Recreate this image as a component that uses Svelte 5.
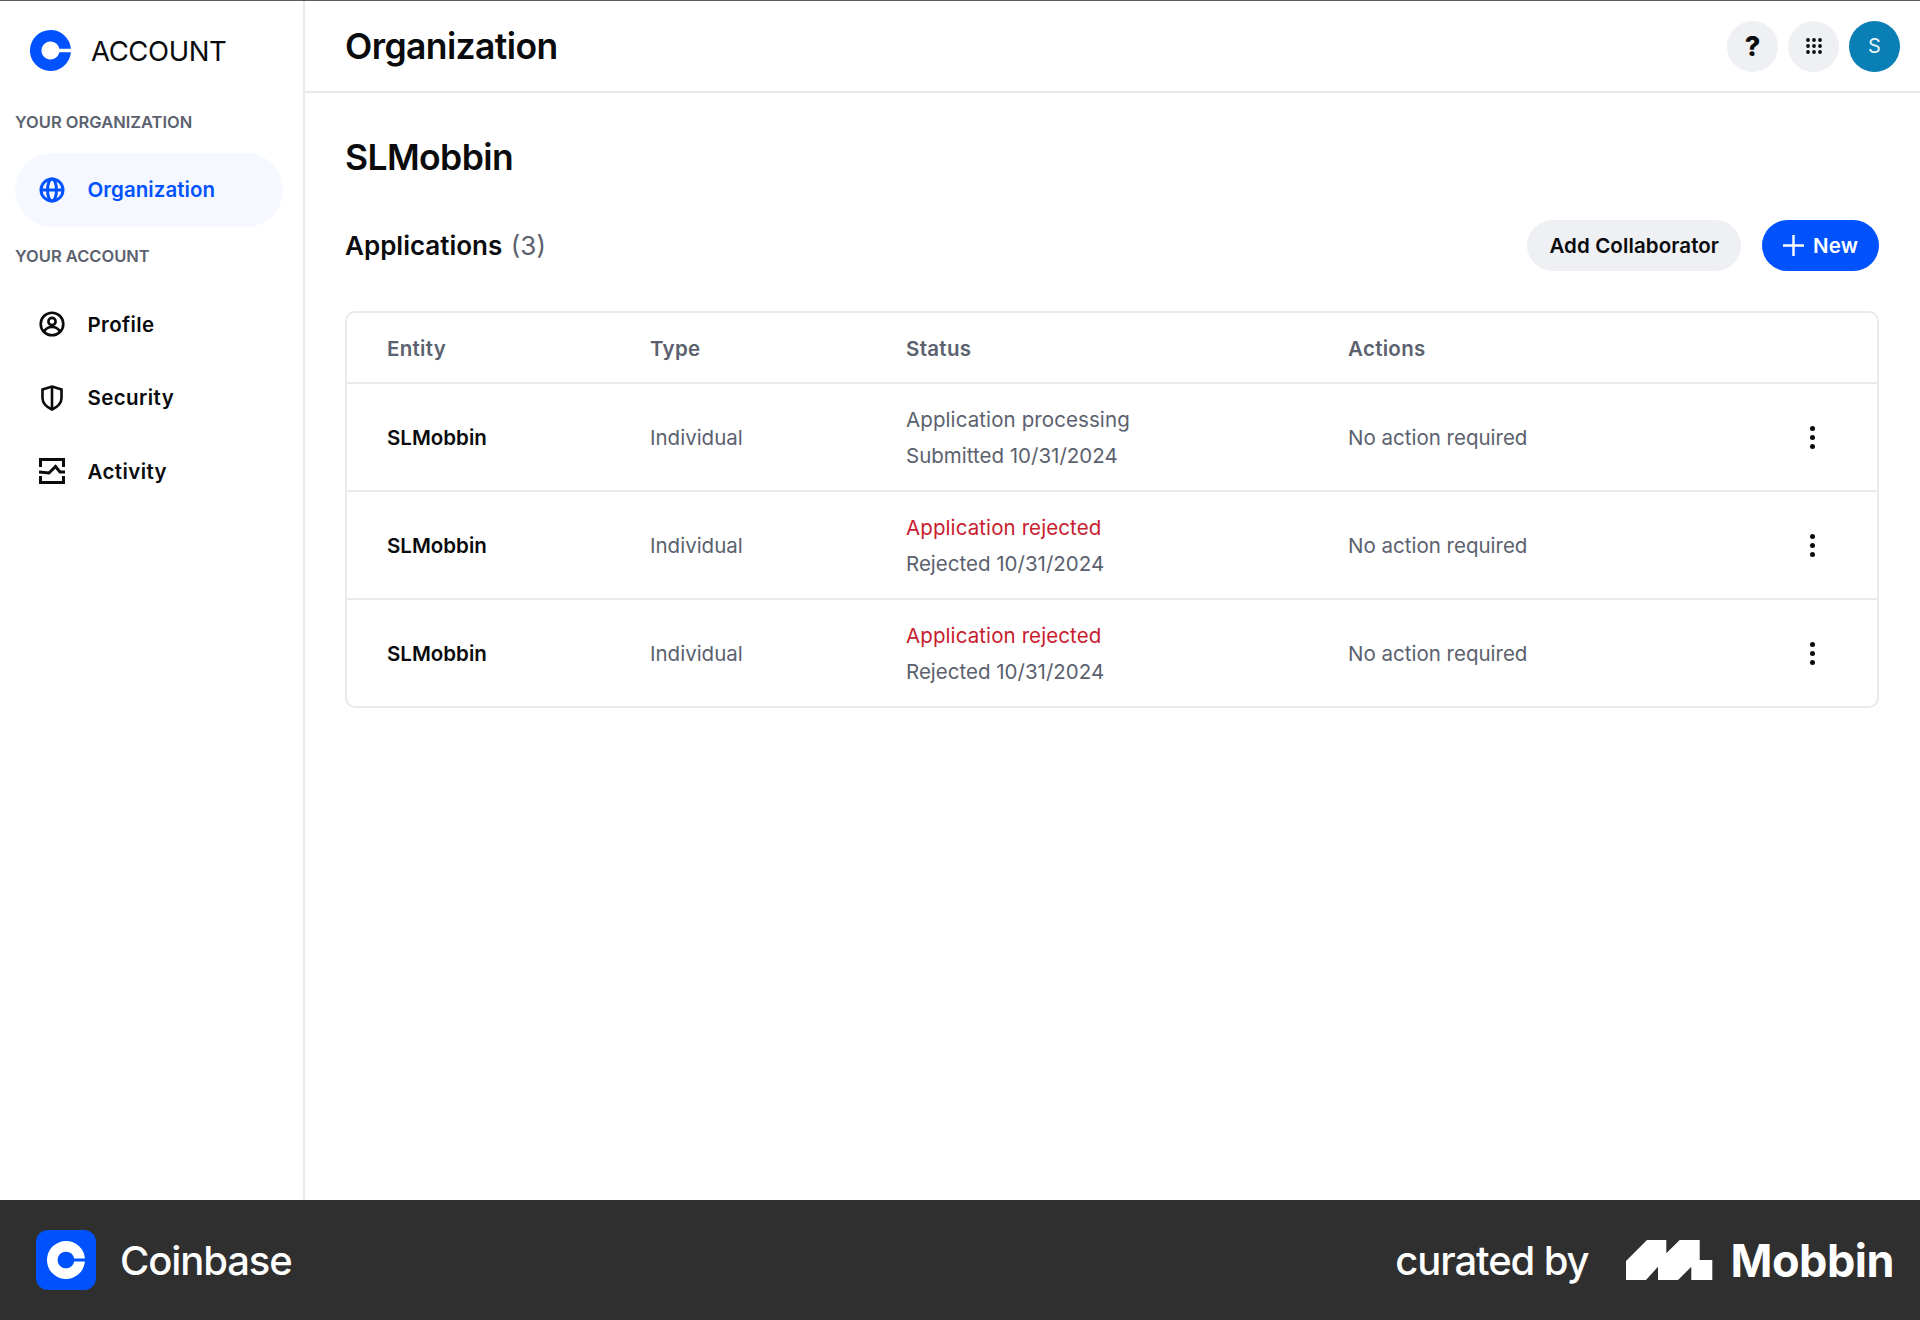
<script>
  const rows = [
    { name: 'SLMobbin', type: 'Individual', status: 'Application processing', date: 'Submitted 10/31/2024', bad: false },
    { name: 'SLMobbin', type: 'Individual', status: 'Application rejected', date: 'Rejected 10/31/2024', bad: true },
    { name: 'SLMobbin', type: 'Individual', status: 'Application rejected', date: 'Rejected 10/31/2024', bad: true }
  ];
</script>

<div class="page">
  <div class="main">
    <aside class="sidebar">
      <div class="brand">
        <svg width="41" height="41" viewBox="0 0 41 41">
          <path fill="#0052ff" d="M20.5 0A20.5 20.5 0 1 0 40.9 22.200H29.300A9 9 0 1 1 29.300 18.800H40.900A20.500 20.500 0 0 0 20.500 0z" />
        </svg>
        <span>ACCOUNT</span>
      </div>
      <div class="label first">YOUR ORGANIZATION</div>
      <a class="item active">
        <svg width="26" height="26" viewBox="0 0 26 26" fill="none" stroke="currentColor" stroke-width="3">
          <circle cx="13" cy="13" r="11" />
          <ellipse cx="13" cy="13" rx="4.5" ry="11" />
          <path d="M2 13h22" />
        </svg>
        Organization
      </a>
      <div class="label">YOUR ACCOUNT</div>
      <a class="item">
        <svg width="26" height="26" viewBox="0 0 26 26" fill="none" stroke="currentColor" stroke-width="2.600">
          <circle cx="13" cy="13" r="11.300" />
          <circle cx="13" cy="10.500" r="3.600" />
          <path d="M5 21c1.500-3.500 4.500-5 8-5s6.500 1.500 8 5" />
        </svg>
        Profile
      </a>
      <a class="item">
        <svg width="26" height="26" viewBox="0 0 26 26" fill="none" stroke="currentColor" stroke-width="2.600">
          <path d="M13 1.500l9.500 3v8.500c0 5-4 9-9.500 11.500C7.500 22 3.500 18 3.500 13V4.500z" />
          <path d="M13 1.500v23" />
        </svg>
        Security
      </a>
      <a class="item">
        <svg width="26" height="26" viewBox="0 0 26 26" fill="none" stroke="currentColor" stroke-width="3">
          <path d="M24.500 9V1.500h-23V9M1.500 18v6.500h23V18" />
          <path d="M0 14l10 1 6.500-6.500 4.500 5.500h5" />
        </svg>
        Activity
      </a>
    </aside>

    <div class="content">
      <header class="topbar">
        <h1>Organization</h1>
        <div class="top-actions">
          <button class="round"><span class="q">?</span></button>
          <button class="round">
            <svg width="16" height="16" viewBox="0 0 16 16" fill="#0a0b0d">
              {#each [2, 8, 14] as y}
                {#each [2, 8, 14] as x}
                  <circle cx={x} cy={y} r="1.900" />
                {/each}
              {/each}
            </svg>
          </button>
          <div class="avatar">S</div>
        </div>
      </header>

      <main class="body">
        <h2>SLMobbin</h2>
        <div class="apps-head">
          <div class="apps-title">Applications <span>(3)</span></div>
          <div class="apps-actions">
            <button class="pill">Add Collaborator</button>
            <button class="pill primary">
              <svg width="21" height="21" viewBox="0 0 21 21" stroke="currentColor" stroke-width="2.400">
                <path d="M10.500 0v21M0 10.500h21" />
              </svg>
              New
            </button>
          </div>
        </div>

        <div class="table">
          <div class="row head">
            <div>Entity</div>
            <div>Type</div>
            <div>Status</div>
            <div>Actions</div>
          </div>
          {#each rows as row}
            <div class="row">
              <div class="name">{row.name}</div>
              <div>{row.type}</div>
              <div class="status">
                <div class="state" class:bad={row.bad}>{row.status}</div>
                <div>{row.date}</div>
              </div>
              <div>No action required</div>
              <div class="kebab"><i></i><i></i><i></i></div>
            </div>
          {/each}
        </div>
      </main>
    </div>
  </div>

  <footer class="footer">
    <div class="foot-left">
      <div class="app-icon">
        <svg width="38" height="38" viewBox="0 0 41 41">
          <path fill="#fff" d="M20.5 0A20.5 20.5 0 1 0 40.9 22.200H29.300A9 9 0 1 1 29.300 18.800H40.900A20.500 20.500 0 0 0 20.500 0z" />
        </svg>
      </div>
      <span>Coinbase</span>
    </div>
    <div class="foot-right">
      <span class="curated">curated by</span>
      <svg class="mobbin-mark" width="87" height="40" viewBox="0 0 87 40" fill="#fff">
        <path d="M0 21L21 0H40.300V13.300L53.700 0H73.700V20H86.300V40H65.300V26.700L52 40H32V26.700L20 40H0z" />
      </svg>
      <span class="mobbin">Mobbin</span>
    </div>
  </footer>
</div>

<style>
  :global(body) {
    margin: 0;
    background: #fff;
  }

  .page {
    width: 1920px;
    height: 1320px;
    display: flex;
    flex-direction: column;
    font-family: Inter, "Liberation Sans", sans-serif;
    color: #0a0b0d;
  }

  .main {
    flex: 1;
    display: flex;
    border-top: 1px solid #5b5b5b;
    min-height: 0;
  }

  .sidebar {
    width: 303px;
    flex-shrink: 0;
    border-right: 2px solid #e8e9ec;
  }

  .brand {
    display: flex;
    align-items: center;
    gap: 20px;
    padding: 29px 0 0 30px;
    height: 41px;
    font-size: 27.500px;
    letter-spacing: -0.4px;
  }

  .label {
    margin: 0 0 12px 15px;
    height: 40px;
    display: flex;
    align-items: center;
    font-size: 16.500px;
    font-weight: 600;
    color: #5b616e;
  }

  .label.first {
    margin-top: 31px;
    margin-bottom: 11px;
  }

  .item {
    display: flex;
    align-items: center;
    gap: 22.500px;
    width: 268px;
    height: 73.500px;
    margin-left: 15px;
    padding-left: 24px;
    box-sizing: border-box;
    font-size: 20.500px;
    font-weight: 600;
    letter-spacing: 0.4px;
    border-radius: 37px;
  }

  .item.active {
    background: #f5f8ff;
    color: #0052ff;
    letter-spacing: 0.05px;
    margin-bottom: 9px;
  }

  .content {
    flex: 1;
    display: flex;
    flex-direction: column;
    min-width: 0;
  }

  .topbar {
    height: 90px;
    display: flex;
    align-items: center;
    justify-content: space-between;
    padding: 0 20px 0 40px;
    border-bottom: 2px solid #e8e9ec;
  }

  h1, h2 {
    margin: 0;
    font-size: 35.500px;
    font-weight: 600;
    letter-spacing: -0.6px;
  }

  .top-actions {
    display: flex;
    gap: 10px;
  }

  .round, .avatar {
    width: 51px;
    height: 51px;
    border: 0;
    border-radius: 50%;
    padding: 0;
    display: flex;
    align-items: center;
    justify-content: center;
    background: #eef0f3;
  }

  .q {
    font-size: 27px;
    font-weight: 800;
    font-family: Inter, sans-serif;
    color: #0a0b0d;
  }

  .avatar {
    background: #0a7fb5;
    color: #e6f4fa;
    font-size: 20px;
  }

  .body {
    padding: 42px 0 0 40px;
  }

  h2 {
    line-height: 46px;
  }

  .apps-head {
    display: flex;
    align-items: center;
    justify-content: space-between;
    margin-top: 39px;
    height: 51px;
    width: 1534px;
  }

  .apps-title {
    font-size: 26px;
    font-weight: 600;
  }

  .apps-title span {
    font-weight: 400;
    color: #5b616e;
    margin-left: 2px;
  }

  .apps-actions {
    display: flex;
    gap: 21px;
  }

  .pill {
    height: 51px;
    border: 0;
    border-radius: 26px;
    padding: 0 22px;
    background: #eef0f3;
    color: #0a0b0d;
    font: 600 20.500px Inter, sans-serif;
    letter-spacing: 0.1px;
    display: flex;
    align-items: center;
    gap: 9px;
  }

  .pill.primary {
    background: #0052ff;
    color: #fff;
    padding: 0 21px;
  }

  .table {
    margin-top: 40px;
    border: 2px solid #e8e9ec;
    border-radius: 10px;
    width: 1534px;
    box-sizing: border-box;
    font-size: 20.500px;
    color: #5b616e;
  }

  .row {
    display: grid;
    grid-template-columns: 263px 256px 442px 1fr 68px;
    align-items: center;
    height: 108px;
    padding-left: 40px;
    box-sizing: border-box;
    border-top: 2px solid #e8e9ec;
  }

  .row.head {
    height: 69px;
    padding-top: 2px;
    border-top: 0;
    font-weight: 600;
    letter-spacing: 0.3px;
  }

  .name {
    color: #0a0b0d;
    font-weight: 600;
  }

  .status {
    line-height: 36px;
    padding-top: 2px;
  }

  .state {
    letter-spacing: 0.1px;
  }

  .bad {
    color: #c8202f;
  }

  .kebab {
    display: flex;
    flex-direction: column;
    align-items: center;
    gap: 4px;
    width: 6px;
  }

  .kebab i {
    width: 5px;
    height: 5px;
    border-radius: 50%;
    background: #0a0b0d;
  }

  .footer {
    height: 120px;
    flex-shrink: 0;
    background: #2f2f2f;
    color: #fff;
    display: flex;
    align-items: center;
    justify-content: space-between;
    padding: 0 26px 0 36px;
  }

  .foot-left, .foot-right {
    display: flex;
    align-items: center;
  }

  .foot-left {
    gap: 24px;
    font-size: 40px;
    font-weight: 500;
    letter-spacing: -1.100px;
  }

  .app-icon {
    width: 60px;
    height: 60px;
    border-radius: 12px;
    background: #0052ff;
    display: flex;
    align-items: center;
    justify-content: center;
  }

  .curated {
    font-size: 40px;
    font-weight: 500;
    letter-spacing: -1.100px;
    margin-right: 37px;
  }

  .mobbin-mark {
    margin-right: 18px;
  }

  .mobbin {
    font-size: 45px;
    font-weight: 700;
    letter-spacing: -0.5px;
  }
</style>
